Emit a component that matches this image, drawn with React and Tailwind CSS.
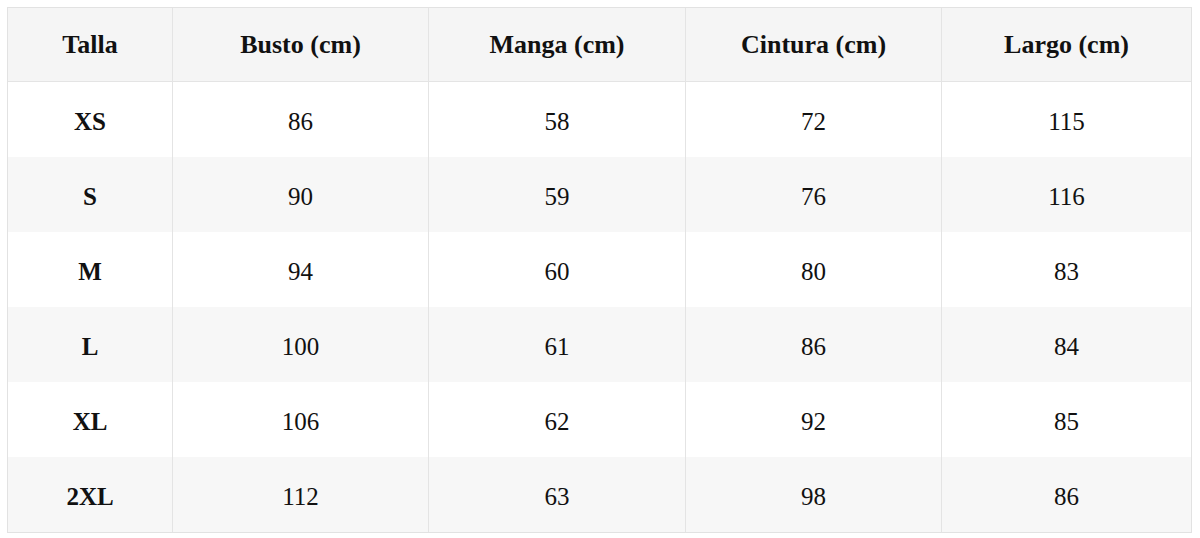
const headers = ['Talla', 'Busto (cm)', 'Manga (cm)', 'Cintura (cm)', 'Largo (cm)'];

const rows = [
  ['XS', '86', '58', '72', '115'],
  ['S', '90', '59', '76', '116'],
  ['M', '94', '60', '80', '83'],
  ['L', '100', '61', '86', '84'],
  ['XL', '106', '62', '92', '85'],
  ['2XL', '112', '63', '98', '86'],
];

const cols = 'grid grid-cols-[164px_256px_257px_256px_1fr]';

export default function App() {
  return (
    <div className="w-[1200px] h-[538px] bg-white p-[7px] pr-[8px] font-['Liberation_Serif','Times_New_Roman',serif] text-[#111]">
      <div className="border border-[#e2e2e2]">
        <div className={`${cols} h-[74px] bg-[#f5f5f5] border-b border-[#e4e4e4]`}>
          {headers.map((h, i) => (
            <div
              key={h}
              className={`flex items-center justify-center text-[26px] font-bold ${i > 0 ? 'border-l border-[#e4e4e4]' : ''}`}
            >
              {h}
            </div>
          ))}
        </div>
        {rows.map((r, ri) => (
          <div key={r[0]} className={`${cols} h-[75px] ${ri % 2 ? 'bg-[#f7f7f7]' : 'bg-white'}`}>
            {r.map((c, i) => (
              <div
                key={i}
                className={`flex items-center justify-center pt-[4px] text-[25px] ${i === 0 ? 'font-bold' : 'border-l border-[#e4e4e4]'}`}
              >
                {c}
              </div>
            ))}
          </div>
        ))}
      </div>
    </div>
  );
}
